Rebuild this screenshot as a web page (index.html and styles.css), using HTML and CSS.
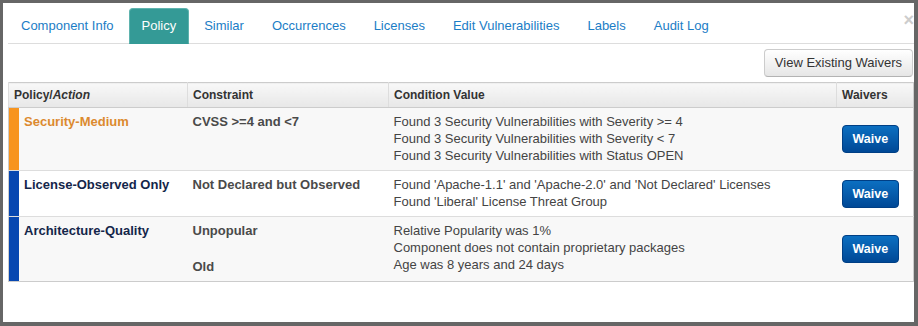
FILE: index.html
```html
<!DOCTYPE html>
<html lang="en">
<head>
    <meta charset="UTF-8">
    <meta name="viewport" content="width=device-width, initial-scale=1.0">
    <title>Component Policy</title>
    <link rel="stylesheet" href="styles.css">
</head>
<body>

<div id="componentModal">
    <span class="close">&times;</span>

    <ul class="tabs">
        <li><a href="#">Component Info</a></li>
        <li class="active"><a href="#">Policy</a></li>
        <li><a href="#">Similar</a></li>
        <li><a href="#">Occurrences</a></li>
        <li><a href="#">Licenses</a></li>
        <li><a href="#">Edit Vulnerabilities</a></li>
        <li><a href="#">Labels</a></li>
        <li><a href="#">Audit Log</a></li>
    </ul>

    <div class="toolbar">
        <button class="btn">View Existing Waivers</button>
    </div>

    <table class="policyTable">
        <colgroup>
            <col class="colPolicy">
            <col class="colConstraint">
            <col class="colCondition">
            <col class="colWaivers">
        </colgroup>
        <thead>
            <tr>
                <th>Policy/<em>Action</em></th>
                <th>Constraint</th>
                <th>Condition Value</th>
                <th>Waivers</th>
            </tr>
        </thead>
        <tbody>
            <tr class="striped">
                <td class="policy medium">Security-Medium</td>
                <td class="constraint"><div>CVSS &gt;=4 and &lt;7</div></td>
                <td class="condition">
                    <div>Found 3 Security Vulnerabilities with Severity &gt;= 4</div>
                    <div>Found 3 Security Vulnerabilities with Severity &lt; 7</div>
                    <div>Found 3 Security Vulnerabilities with Status OPEN</div>
                </td>
                <td class="waivers"><button class="btn-waive">Waive</button></td>
            </tr>
            <tr>
                <td class="policy low">License-Observed Only</td>
                <td class="constraint"><div>Not Declared but Observed</div></td>
                <td class="condition">
                    <div>Found 'Apache-1.1' and 'Apache-2.0' and 'Not Declared' Licenses</div>
                    <div>Found 'Liberal' License Threat Group</div>
                </td>
                <td class="waivers"><button class="btn-waive">Waive</button></td>
            </tr>
            <tr class="striped">
                <td class="policy low">Architecture-Quality</td>
                <td class="constraint">
                    <div>Unpopular</div>
                    <div>Old</div>
                </td>
                <td class="condition">
                    <div>Relative Popularity was 1%</div>
                    <div>Component does not contain proprietary packages</div>
                    <div>Age was 8 years and 24 days</div>
                </td>
                <td class="waivers"><button class="btn-waive">Waive</button></td>
            </tr>
        </tbody>
    </table>
</div>

</body>
</html>
```

FILE: styles.css
```css
body {
    margin: 0;
    font-family: "Liberation Sans", Helvetica, Arial, sans-serif;
    font-size: 13px;
    color: #333;
    background-color: #666;
}

#componentModal {
    position: relative;
    box-sizing: border-box;
    height: 326px;
    padding: 5px 1px 0 5px;
    background-color: #fff;
    border: 3px solid #666;
    border-right-width: 4px;
    border-bottom-width: 4px;
}

.close {
    position: absolute;
    top: 8px;
    right: 0;
    font-size: 18px;
    font-weight: bold;
    line-height: 18px;
    color: #cdcdcd;
    cursor: pointer;
}

/* Tabs */
.tabs {
    display: flex;
    list-style: none;
    margin: 0 -1px 0 0;
    padding: 0;
    border-bottom: 1px solid #ddd;
}

.tabs li {
    margin-right: 2px;
    margin-bottom: -1px;
}

.tabs a {
    display: block;
    padding: 8px 12px;
    line-height: 18px;
    border: 1px solid transparent;
    border-radius: 4px 4px 0 0;
    color: #1b7dc6;
    text-decoration: none;
}

.tabs .active a {
    background-color: #349a96;
    border-color: #5fb3ae #5fb3ae #349a96;
    color: #fff;
}

/* Toolbar */
.toolbar {
    display: flex;
    justify-content: flex-end;
    margin: 5px 0;
}

.btn {
    padding: 5px 10px;
    font-family: inherit;
    font-size: 13px;
    line-height: 16px;
    color: #333;
    background: linear-gradient(#ffffff, #e6e6e6);
    border: 1px solid #ccc;
    border-bottom-color: #b3b3b3;
    border-radius: 4px;
    cursor: pointer;
}

/* Table */
.policyTable {
    width: 905px;
    table-layout: fixed;
    border-collapse: collapse;
    border: 1px solid #ccc;
}

.colPolicy { width: 179px; }
.colConstraint { width: 201px; }
.colCondition { width: 448px; }
.colWaivers { width: 77px; }

.policyTable th {
    padding: 4px 5px;
    font-size: 12px;
    line-height: 16px;
    text-align: left;
    color: #333;
    background: linear-gradient(#f8f8f8, #e7e7e7);
    border-left: 1px solid #ddd;
    border-bottom: 1px solid #ccc;
}

.policyTable td {
    padding: 5px 5px 6px;
    line-height: 17px;
    vertical-align: top;
    border-top: 1px solid #ddd;
}

.policyTable tr.striped td {
    background-color: #f8f8f8;
}

.policy {
    padding-left: 15px !important;
    font-weight: bold;
}

.policy.medium {
    color: #dc8a2f;
    box-shadow: inset 10px 0 0 #f7941e;
}

.policy.low {
    color: #14264a;
    box-shadow: inset 10px 0 0 #0747b1;
}

.constraint {
    font-weight: bold;
    color: #4a4a4a;
}

.constraint div + div {
    margin-top: 19px;
}

.condition {
    color: #444;
}

.policyTable td.waivers {
    vertical-align: middle;
    padding-top: 5px;
    padding-bottom: 5px;
}

.btn-waive {
    padding: 6px 10px;
    font-family: inherit;
    font-size: 12.5px;
    font-weight: bold;
    line-height: 14px;
    color: #fff;
    background: linear-gradient(#0c6fc1, #004896);
    border: 1px solid #003f85;
    border-radius: 4px;
    cursor: pointer;
}
```
